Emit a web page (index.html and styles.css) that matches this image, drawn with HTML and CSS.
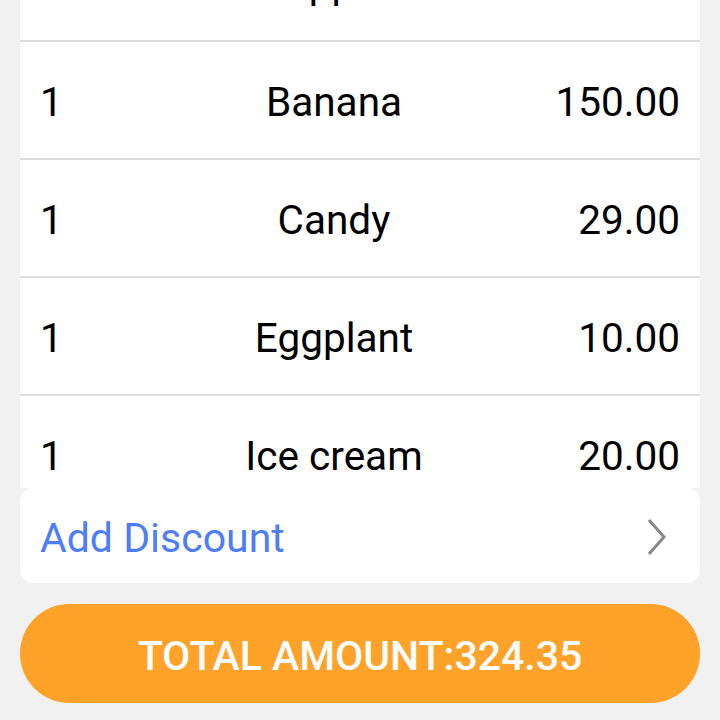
FILE: index.html
```html
<!DOCTYPE html>
<html lang="en">

<head>
    <meta charset="UTF-8">
    <title>Order Summary</title>
    <link rel="stylesheet" href="styles.css">
</head>

<body>
    <div id="page">
        <div id="items">
            <div class="list">
                <div class="row"><span class="qty">1</span><span class="name">Apple</span><span class="price">115.35</span></div>
                <div class="row"><span class="qty">1</span><span class="name">Banana</span><span class="price">150.00</span></div>
                <div class="row"><span class="qty">1</span><span class="name">Candy</span><span class="price">29.00</span></div>
                <div class="row"><span class="qty">1</span><span class="name">Eggplant</span><span class="price">10.00</span></div>
                <div class="row"><span class="qty">1</span><span class="name">Ice cream</span><span class="price">20.00</span></div>
            </div>
        </div>
        <div id="discount">
            <span>Add Discount</span>
            <svg class="chevron" width="24" height="40" viewBox="0 0 24 40">
                <path d="M4 3 L19 20 L4 37" fill="none" stroke="#888" stroke-width="3"/>
            </svg>
        </div>
        <div id="total">TOTAL AMOUNT:324.35</div>
    </div>
</body>

</html>
```

FILE: styles.css
```css
html, body {
    margin: 0;
    padding: 0;
    background-color: #f1f1f1;
}

#page {
    width: 720px;
    height: 720px;
    padding: 0 20px;
    box-sizing: border-box;
    display: flex;
    flex-direction: column;
    font-family: Roboto, "Liberation Sans", sans-serif;
    overflow: hidden;
}

#items {
    height: 488px;
    overflow: hidden;
    background-color: #fff;
}

.list {
    margin-top: -76px;
}

.row {
    display: grid;
    grid-template-columns: 120px 1fr 172px;
    align-items: center;
    height: 118px;
    padding: 4px 20px 0 20px;
    box-sizing: border-box;
    border-bottom: 2px solid #dddddd;
    font-size: 40.5px;
    color: #000;
}

.row .name {
    text-align: center;
}

.row .price {
    text-align: right;
}

#discount {
    height: 95px;
    background-color: #fff;
    border-radius: 14px;
    display: flex;
    align-items: center;
    justify-content: space-between;
    padding: 4px 31px 0 20px;
    box-sizing: border-box;
    font-size: 41px;
    color: #4f7df5;
}

#discount .chevron {
    margin-top: -2px;
}

#total {
    margin-top: 21px;
    height: 99px;
    padding-top: 4px;
    box-sizing: border-box;
    border-radius: 50px;
    background-color: #ffa229;
    color: #fff;
    font-size: 41px;
    font-weight: 500;
    display: flex;
    align-items: center;
    justify-content: center;
}
```
